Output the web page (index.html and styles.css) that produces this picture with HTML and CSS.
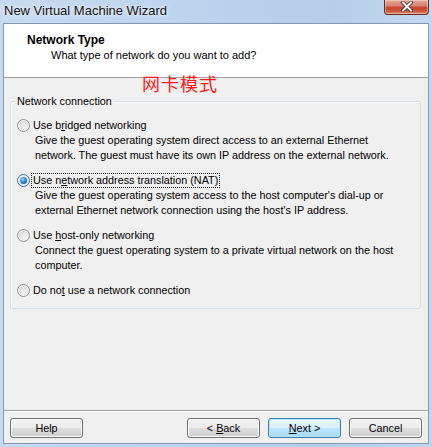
FILE: index.html
```html
<!DOCTYPE html>
<html>
<head>
<meta charset="utf-8">
<link rel="stylesheet" href="styles.css">
</head>
<body>
<div class="window">
  <div class="titlebar">
    <span class="title">New Virtual Machine Wizard</span>
    <span class="close">
      <svg width="14" height="11" viewBox="0 0 14 11"><path d="M3 1.5 L11 9.5 M11 1.5 L3 9.5" stroke="#3a2a2a" stroke-width="3.6" stroke-linecap="square"/><path d="M3 1.5 L11 9.5 M11 1.5 L3 9.5" stroke="#ffffff" stroke-width="2" stroke-linecap="square"/></svg>
    </span>
  </div>
  <div class="client">
    <div class="header">
      <div class="h-title">Network Type</div>
      <div class="h-sub">What type of network do you want to add?</div>
    </div>
    <div class="body">
      <fieldset class="group">
        <legend>Network connection</legend>
        <div class="options">
          <div class="option">
            <div class="opt-row"><span class="radio"></span><span class="lbl">Use b<u>r</u>idged networking</span></div>
            <div class="desc">Give the guest operating system direct access to an external Ethernet<br>network. The guest must have its own IP address on the external network.</div>
          </div>
          <div class="option">
            <div class="opt-row"><span class="radio checked"><span class="dot"></span></span><span class="lbl focus">Use n<u>e</u>twork address translation (NAT)</span></div>
            <div class="desc">Give the guest operating system access to the host computer's dial-up or<br>external Ethernet network connection using the host's IP address.</div>
          </div>
          <div class="option">
            <div class="opt-row"><span class="radio"></span><span class="lbl">Use <u>h</u>ost-only networking</span></div>
            <div class="desc">Connect the guest operating system to a private virtual network on the host<br>computer.</div>
          </div>
          <div class="option">
            <div class="opt-row"><span class="radio"></span><span class="lbl">Do no<u>t</u> use a network connection</span></div>
          </div>
        </div>
      </fieldset>
    </div>
    <div class="footer">
      <button class="btn">Help</button>
      <span class="spacer"></span>
      <button class="btn">&lt; <u>B</u>ack</button>
      <button class="btn default"><u>N</u>ext &gt;</button>
      <button class="btn">Cancel</button>
    </div>
  </div>
  <div class="note">网卡模式</div>
</div>
</body>
</html>
```
FILE: styles.css
```css
html, body {
  margin: 0;
  padding: 0;
}
body {
  width: 432px;
  height: 447px;
  overflow: hidden;
  font-family: "Liberation Sans", Arial, sans-serif;
  font-size: 10.8px;
  color: #000;
}
.window {
  position: relative;
  width: 432px;
  height: 447px;
  box-sizing: border-box;
  padding: 0 3px 3px 3px;
  display: flex;
  flex-direction: column;
  background: linear-gradient(to right, #c7dbf0 0%, #bcd3ec 45%, #b5cde9 75%, #c3d8ee 100%);
}
.titlebar {
  height: 23px;
  display: flex;
  align-items: flex-start;
  margin: 0 -3px;
  padding-left: 4px;
}
.title {
  font-size: 13px;
  line-height: 13px;
  margin-top: 4px;
  color: #111;
  text-shadow: 0 0 6px #eaf2fb, 0 0 3px #eef4fb;
}
.close {
  margin-left: auto;
  margin-right: 3px;
  width: 45px;
  height: 15px;
  box-sizing: border-box;
  border: 1px solid #6a2a22;
  border-top: none;
  border-radius: 0 0 4px 4px;
  background: linear-gradient(to bottom, #e9a99a 0%, #d98270 40%, #c4442b 55%, #cf5d3f 85%, #e39c7f 100%);
  display: flex;
  align-items: center;
  justify-content: center;
  box-shadow: inset 0 0 0 1px rgba(255,220,210,0.5);
}
.close svg {
  display: block;
  margin-top: -1px;
}
.client {
  height: 421px;
  box-sizing: border-box;
  border: 1px solid #8199b5;
  display: flex;
  flex-direction: column;
  background: #f0f0f0;
}
.header {
  height: 54px;
  box-sizing: border-box;
  background: #fff;
  border-bottom: 1px solid #a0a0a0;
  padding: 9px 0 0 23px;
  line-height: 15px;
}
.h-title {
  font-weight: bold;
  font-size: 12px;
}
.h-sub {
  padding-left: 24px;
  font-size: 11px;
}
.body {
  flex: 1;
  padding: 16px 7px 0 6px;
}
.group {
  margin: 0;
  border: 1px solid #d5dfe5;
  border-radius: 3px;
  padding: 10px 6px 10px 6px;
  min-width: 0;
  box-shadow: 1px 1px 0 #fff inset;
}
.group legend {
  padding: 0 2px;
  margin-left: -2px;
  line-height: 14px;
}
.options {
  display: flex;
  flex-direction: column;
  gap: 10px;
}
.opt-row {
  display: flex;
  align-items: center;
  height: 15px;
}
.radio {
  width: 13px;
  height: 13px;
  box-sizing: border-box;
  border-radius: 50%;
  border: 1px solid #8f9396;
  background: radial-gradient(circle at 60% 65%, #f4f4f4 0%, #e2e2e2 45%, #cfd0d2 100%);
  box-shadow: inset 0 0 0 1px #f7f7f7;
  display: flex;
  align-items: center;
  justify-content: center;
  flex: none;
}
.radio.checked {
  border-color: #3b6d9b;
  background: radial-gradient(circle, #f2f6fa 0%, #dbe4ed 100%);
}
.dot {
  width: 7px;
  height: 7px;
  border-radius: 50%;
  background: radial-gradient(circle at 40% 35%, #a6dcf8 0%, #3f9be0 35%, #125c9e 80%, #0e4a82 100%);
}
.lbl {
  margin-left: 1px;
  padding: 0 1px;
  line-height: 13px;
  border: 1px dotted transparent;
}
.lbl.focus {
  border-color: #222;
}
.desc {
  padding-left: 18px;
  line-height: 15px;
}
.footer {
  height: 33px;
  box-sizing: border-box;
  border-top: 1px solid #a0a0a0;
  box-shadow: inset 0 1px 0 #fff;
  padding: 7px 6px 0 6px;
  display: flex;
  align-items: flex-start;
  gap: 8px;
}
.spacer {
  flex: 1;
}
.btn {
  width: 73px;
  height: 20px;
  margin: 0;
  padding: 0;
  box-sizing: border-box;
  font-family: "Liberation Sans", Arial, sans-serif;
  font-size: 10.8px;
  color: #000;
  border: 1px solid #707070;
  border-radius: 3px;
  background: linear-gradient(to bottom, #f2f2f2 0%, #ebebeb 50%, #dddddd 51%, #cfcfcf 100%);
  box-shadow: inset 0 0 0 1px #fbfbfb;
}
.btn.default {
  border-color: #3c7fb1;
  background: linear-gradient(to bottom, #eaf6fd 0%, #d9f0fc 50%, #bee6fd 51%, #a7d9f5 100%);
  box-shadow: inset 0 0 0 1px #b9e4fb;
}
.note {
  position: absolute;
  left: 142px;
  top: 74px;
  font-family: "Noto Sans CJK SC", sans-serif;
  font-size: 18px;
  line-height: 19px;
  letter-spacing: 1px;
  color: #ff1a1a;
}
```
